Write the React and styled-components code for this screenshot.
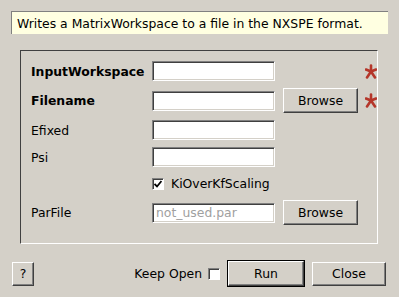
import React from "react";
import styled, { createGlobalStyle } from "styled-components";

const Global = createGlobalStyle`
  html, body {
    margin: 0;
    padding: 0;
    background: #d4d0c8;
  }
  body {
    font-family: "DejaVu Sans", "Liberation Sans", sans-serif;
    font-size: 12.4px;
    color: #000000;
  }
`;

const Dialog = styled.div`
  width: 399px;
  height: 297px;
  box-sizing: border-box;
  padding: 11px 11px 0 11px;
  display: flex;
  flex-direction: column;
`;

const Description = styled.div`
  height: 23px;
  box-sizing: border-box;
  width: 377px;
  background: #ffffe1;
  border-top: 1px solid #808080;
  border-left: 1px solid #808080;
  display: flex;
  align-items: center;
  padding-left: 5px;
`;

const Group = styled.div`
  margin: 16px 10px 0 9px;
  box-sizing: border-box;
  height: 194px;
  border: 1px solid;
  border-color: #404040 #ffffff #ffffff #404040;
  padding: 10px 0 0 10px;
  display: flex;
  flex-direction: column;
  gap: 7px;
`;

const Row = styled.div`
  height: ${(p) => p.$h || 20}px;
  display: flex;
  align-items: center;
`;

const Label = styled.div`
  width: 121px;
  font-weight: ${(p) => (p.$bold ? 700 : 400)};
`;

const Input = styled.div`
  width: 123px;
  height: 20px;
  box-sizing: border-box;
  background: #ffffff;
  border: 1px solid;
  border-color: #808080 #ffffff #ffffff #808080;
  box-shadow: inset 1px 1px #404040, inset -1px -1px #d4d0c8;
  color: #a0a0a0;
  display: flex;
  align-items: center;
  padding-left: 3px;
`;

const Button = styled.div`
  box-sizing: border-box;
  flex: none;
  height: ${(p) => p.$h || 25}px;
  width: ${(p) => p.$w}px;
  margin-left: ${(p) => p.$ml || 0}px;
  border: 1px solid;
  border-color: #ffffff #404040 #404040 #ffffff;
  box-shadow: inset -1px -1px #808080;
  outline: ${(p) => (p.$default ? "1px solid #000000" : "none")};
  display: flex;
  align-items: center;
  justify-content: center;
  color: #000000;
`;

const Star = styled.svg`
  width: 12px;
  height: 15px;
  margin-left: ${(p) => (p.$after ? 7 : 90)}px;
`;

const CheckLabel = styled.div`
  display: flex;
  align-items: center;
  gap: ${(p) => p.$gap}px;
  margin-left: ${(p) => p.$ml || 0}px;
`;

const Box = styled.div`
  width: 12px;
  height: 12px;
  box-sizing: border-box;
  background: #ffffff;
  border: 1px solid;
  border-color: #808080 #ffffff #ffffff #808080;
  box-shadow: inset 1px 1px #404040;
  display: flex;
  align-items: center;
  justify-content: center;
`;

const Footer = styled.div`
  margin-top: 17px;
  display: flex;
  align-items: center;
  padding: 0 2px 0 1px;
`;

const Actions = styled.div`
  margin-left: auto;
  display: flex;
  align-items: center;
  gap: 8px;
`;

function Asterisk({ after }) {
  return (
    <Star viewBox="0 0 12 15" $after={after}>
      <g stroke="#b5362a" strokeWidth="2.6" strokeLinecap="round">
        <line x1="6" y1="7.5" x2="6" y2="1.5" />
        <line x1="6" y1="7.5" x2="11" y2="5.5" />
        <line x1="6" y1="7.5" x2="10" y2="13.5" />
        <line x1="6" y1="7.5" x2="2" y2="13.5" />
        <line x1="6" y1="7.5" x2="1" y2="5.5" />
      </g>
    </Star>
  );
}

function Check({ checked }) {
  return (
    <Box>
      {checked && (
        <svg width="8" height="8" viewBox="0 0 8 8">
          <path d="M0.5 4 L3 6.5 L7.5 1" fill="none" stroke="#000" strokeWidth="1.8" />
        </svg>
      )}
    </Box>
  );
}

export default function App() {
  return (
    <>
      <Global />
      <Dialog>
        <Description>Writes a MatrixWorkspace to a file in the NXSPE format.</Description>
        <Group>
          <Row>
            <Label $bold>InputWorkspace</Label>
            <Input />
            <Asterisk />
          </Row>
          <Row $h={25}>
            <Label $bold>Filename</Label>
            <Input />
            <Button $w={75} $ml={8}>Browse</Button>
            <Asterisk after />
          </Row>
          <Row>
            <Label>Efixed</Label>
            <Input />
          </Row>
          <Row>
            <Label>Psi</Label>
            <Input />
          </Row>
          <Row $h={19}>
            <CheckLabel $gap={7} $ml={121}>
              <Check checked />
              KiOverKfScaling
            </CheckLabel>
          </Row>
          <Row $h={25}>
            <Label>ParFile</Label>
            <Input>not_used.par</Input>
            <Button $w={75} $ml={8}>Browse</Button>
          </Row>
        </Group>
        <Footer>
          <Button $w={22} $h={24}>?</Button>
          <Actions>
            <CheckLabel $gap={6}>
              Keep Open
              <Check />
            </CheckLabel>
            <Button $w={76} $default>Run</Button>
            <Button $w={74} $h={24}>Close</Button>
          </Actions>
        </Footer>
      </Dialog>
    </>
  );
}
